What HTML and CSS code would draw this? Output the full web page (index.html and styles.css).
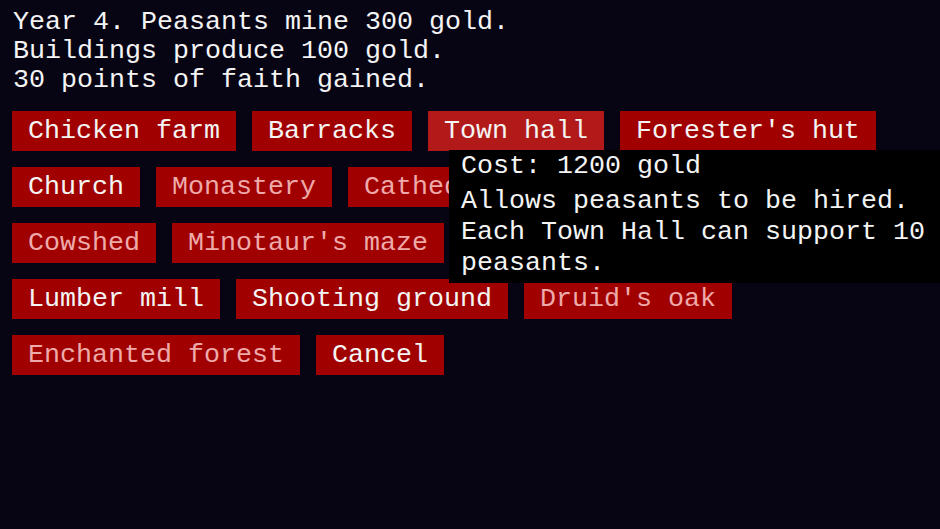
FILE: index.html
```html
<!DOCTYPE html>
<html lang="en">
<head>
    <meta charset="UTF-8">
    <meta name="viewport" content="width=device-width, initial-scale=1.0">
    <title>Build</title>
    <link rel="stylesheet" href="styles.css">
</head>
<body>

    <div class="game">
        <div class="report">
            <p>Year 4. Peasants mine 300 gold.</p>
            <p>Buildings produce 100 gold.</p>
            <p>30 points of faith gained.</p>
        </div>
        <div class="build-list">
            <button class="build-btn">Chicken farm</button>
            <button class="build-btn">Barracks</button>
            <button class="build-btn hover">Town hall</button>
            <button class="build-btn">Forester's hut</button>
            <button class="build-btn">Church</button>
            <button class="build-btn locked">Monastery</button>
            <button class="build-btn locked">Cathedral</button>
            <button class="build-btn locked">Wizard's tower</button>
            <button class="build-btn locked">Cowshed</button>
            <button class="build-btn locked">Minotaur's maze</button>
            <button class="build-btn locked">Witch's cottage</button>
            <button class="build-btn">Lumber mill</button>
            <button class="build-btn">Shooting ground</button>
            <button class="build-btn locked">Druid's oak</button>
            <button class="build-btn locked">Enchanted forest</button>
            <button class="build-btn">Cancel</button>
        </div>

        <div class="tooltip">
            <p class="tooltip-cost">Cost: 1200 gold</p>
            <p>Allows peasants to be hired. Each Town Hall can support 10 peasants.</p>
        </div>
    </div>

</body>
</html>
```

FILE: styles.css
```css
body {
    margin: 0;
    background-color: #070414;
    color: #f4f4f4;
    font-family: "Liberation Mono", "Courier New", monospace;
    font-size: 20pt;
    overflow: hidden;
}
p {
    margin: 0;
}
.game {
    position: relative;
    padding: 8px 12px;
    height: 529px;
    box-sizing: border-box;
}
.report {
    line-height: 29px;
    padding-left: 1px;
}
.build-list {
    display: flex;
    flex-wrap: wrap;
    gap: 16px;
    margin-top: 16px;
}
.build-btn {
    height: 40px;
    padding: 0 16px;
    border: none;
    border-radius: 0;
    background-color: #a00000;
    color: #f4f4f4;
    font-family: inherit;
    font-size: inherit;
    line-height: 40px;
    white-space: pre;
}
.build-btn.hover {
    background-color: #b21a1a;
}
.build-btn.locked {
    color: #eeaaaa;
}
.tooltip {
    position: absolute;
    left: 449px;
    top: 150px;
    width: 491px;
    box-sizing: border-box;
    padding: 1px 12px 4px;
    background-color: #000;
    line-height: 31px;
}
.tooltip-cost {
    margin-bottom: 4px;
}
```
